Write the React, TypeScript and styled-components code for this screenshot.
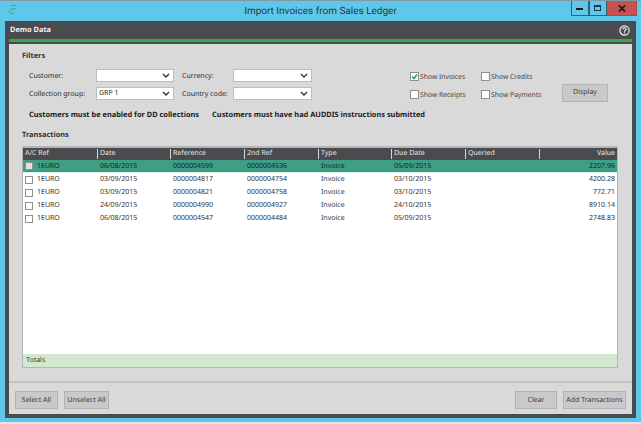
import styled, { createGlobalStyle } from 'styled-components';

const GlobalStyle = createGlobalStyle`
    html, body {
        margin: 0;
        padding: 0;
        background: #e4e4e4;
    }
    * {
        box-sizing: border-box;
    }
`;

const Window = styled.div`
    width: 641px;
    height: 422px;
    display: flex;
    flex-direction: column;
    padding: 0 5px 4px 5px;
    background: #5fc8ea;
    border-top: 1px solid #7d9aa5;
    font-family: 'Noto Sans', 'Liberation Sans', sans-serif;
    font-size: 7px;
    text-rendering: geometricPrecision;
    color: #2b2b2b;
`;

const TitleBar = styled.div`
    position: relative;
    height: 20px;
    flex: none;
    display: flex;
    align-items: center;
    justify-content: center;
    font-family: Roboto, 'Liberation Sans', sans-serif;
    font-size: 10px;
    color: #1d3a47;
`;

const AppIcon = styled.svg`
    position: absolute;
    left: 3px;
    top: 3px;
`;

const Controls = styled.div`
    position: absolute;
    top: 0;
    right: -1px;
    display: flex;
    height: 15px;
`;

const Control = styled.div<{ $close?: boolean; $w: number }>`
    width: ${(p) => p.$w}px;
    display: flex;
    align-items: center;
    justify-content: center;
    border: 1px solid ${(p) => (p.$close ? '#a94a42' : '#33616f')};
    border-top: none;
    border-left-width: ${(p) => (p.$close ? 0 : 1)}px;
    background: ${(p) => (p.$close ? '#c75050' : 'transparent')};
    color: #1a1a1a;
`;

const Frame = styled.div`
    flex: 1;
    display: flex;
    flex-direction: column;
    border: 4px solid #4a4b4f;
    border-top: none;
    min-height: 0;
`;

const Header = styled.div`
    height: 18px;
    flex: none;
    display: flex;
    align-items: center;
    justify-content: space-between;
    padding: 0 2px 0 1px;
    background: #4a4b4f;
    color: #f2f2f2;
    font-size: 7.4px;
    font-weight: 700;
`;

const GreenRule = styled.div`
    height: 3px;
    flex: none;
    background: #36a93f;
    margin-bottom: 2px;
    box-shadow: 0 2px 0 #4a4b4f;
`;

const Content = styled.div`
    flex: 1;
    min-height: 0;
    display: flex;
    flex-direction: column;
    background: #d9d9d9;
`;

const Main = styled.div`
    flex: 1;
    min-height: 0;
    display: flex;
    flex-direction: column;
    padding: 6px 14px 13px 13px;
    border-bottom: 2px solid #c4c4c4;
`;

const SectionTitle = styled.div`
    height: 12px;
    line-height: 12px;
    font-size: 7.4px;
    font-weight: 700;
    color: #333;
`;

const FilterGrid = styled.div`
    display: grid;
    grid-template-columns: 67px 78px 8px 51px 79px 98px 71px 81px 46px;
    grid-template-rows: 13px 13px;
    row-gap: 5px;
    margin: 7px 0 0 7px;
    align-items: center;
`;

const FieldLabel = styled.div<{ $col: number }>`
    grid-column: ${(p) => p.$col};
    padding-top: 2px;
    white-space: nowrap;
`;

const Select = styled.div<{ $col: number }>`
    grid-column: ${(p) => p.$col};
    height: 13px;
    display: flex;
    align-items: center;
    justify-content: space-between;
    padding: 0 3px 0 2px;
    background: #fff;
    border: 1px solid #bdbdbd;
`;

const CheckItem = styled.div<{ $col: number }>`
    grid-column: ${(p) => p.$col};
    display: flex;
    align-items: center;
    gap: 1px;
    padding-top: 2px;
    white-space: nowrap;
    color: #444;
    font-size: 6.8px;
`;

const Box = styled.div<{ $tint?: boolean; $size: number }>`
    width: ${(p) => p.$size}px;
    height: ${(p) => p.$size}px;
    flex: none;
    display: flex;
    align-items: center;
    justify-content: center;
    background: ${(p) => (p.$tint ? '#e6e2d4' : '#fff')};
    border: 1px solid #8f8f8f;
`;

const Button = styled.div<{ $w: number }>`
    width: ${(p) => p.$w}px;
    height: 18px;
    display: flex;
    align-items: center;
    justify-content: center;
    flex: none;
    background: #c9c9c9;
    border: 1px solid #b3b3b3;
    color: #3a3a3a;
    white-space: nowrap;
`;

const DisplayButton = styled(Button)`
    grid-column: 9;
    grid-row: 1 / span 2;
    margin-top: 16px;
`;

const Notices = styled.div`
    display: flex;
    gap: 13px;
    height: 12px;
    line-height: 12px;
    margin: 9px 0 8px 7px;
    font-size: 7.4px;
    font-weight: 700;
    color: #1c1c1c;
    white-space: nowrap;
`;

const Table = styled.div`
    flex: 1;
    min-height: 0;
    display: flex;
    flex-direction: column;
    margin: 5px 0 0 0;
    background: #fff;
    border: 1px solid #b5b5b5;
    border-top-width: 2px;
`;

const columns = '74px 73px 74px 74px 73px 74px 74px 79px';

const HeadRow = styled.div`
    display: grid;
    grid-template-columns: ${columns};
    height: 12px;
    flex: none;
    background: #4a4b4f;
    color: #e6e6e6;
`;

const HeadCell = styled.div<{ $right?: boolean; $first?: boolean }>`
    padding: 0 3px 0 2px;
    text-align: ${(p) => (p.$right ? 'right' : 'left')};
    border-left: ${(p) => (p.$first ? 'none' : '1px solid #d8d8d8')};
    margin: 1px 0;
    line-height: 10px;
`;

const Row = styled.div<{ $selected?: boolean }>`
    display: grid;
    grid-template-columns: ${columns};
    height: 13px;
    flex: none;
    align-items: center;
    background: ${(p) => (p.$selected ? '#3f9f85' : '#fff')};
    color: ${(p) => (p.$selected ? '#16231f' : '#333')};
    border-bottom: ${(p) => (p.$selected ? '1px solid #dff0ea' : 'none')};
`;

const Cell = styled.div<{ $right?: boolean }>`
    padding: 0 3px;
    text-align: ${(p) => (p.$right ? 'right' : 'left')};
    white-space: nowrap;
`;

const RefCell = styled.div`
    display: flex;
    align-items: center;
    gap: 4px;
    padding-left: 2px;
`;

const RowsArea = styled.div`
    flex: 1;
    min-height: 0;
`;

const Totals = styled.div`
    height: 13px;
    flex: none;
    line-height: 13px;
    padding-left: 3px;
    background: #d3e9cf;
    color: #3a3a3a;
`;

const Footer = styled.div`
    height: 31px;
    flex: none;
    display: flex;
    align-items: flex-start;
    justify-content: space-between;
    padding: 8px 6px 0 6px;
`;

const ButtonGroup = styled.div`
    display: flex;
    gap: 6px;
`;

const rows = [
    ['06/08/2015', '0000004599', '0000004536', '05/09/2015', '2207.96'],
    ['03/09/2015', '0000004817', '0000004754', '03/10/2015', '4200.28'],
    ['03/09/2015', '0000004821', '0000004758', '03/10/2015', '772.71'],
    ['24/09/2015', '0000004990', '0000004927', '24/10/2015', '8910.14'],
    ['06/08/2015', '0000004547', '0000004484', '05/09/2015', '2748.83'],
];

const heads = ['A/C Ref', 'Date', 'Reference', '2nd Ref', 'Type', 'Due Date', 'Queried', 'Value'];

const Chevron = () => (
    <svg width="8" height="5" viewBox="0 0 8 5">
        <path d="M1 1l3 3 3-3" fill="none" stroke="#333" strokeWidth="1.4" />
    </svg>
);

const App = () => (
    <>
        <GlobalStyle />
        <Window>
            <TitleBar>
                Import Invoices from Sales Ledger
                <AppIcon width="9" height="11" viewBox="0 0 9 11">
                    <path d="M2 3c1-2 4-2 6-1M8 5C6 4 3 5 1 8c2 2 4 2 5 0" fill="none" stroke="#3f9f85" strokeWidth="1" />
                </AppIcon>
                <Controls>
                    <Control $w={18}>
                        <svg width="8" height="3">
                            <rect width="7" height="2" y="1" fill="#1a1a1a" />
                        </svg>
                    </Control>
                    <Control $w={18}>
                        <svg width="8" height="7">
                            <rect x="0.5" y="0.5" width="6" height="5" fill="none" stroke="#1a3a4a" />
                            <rect x="0.5" y="0.5" width="6" height="1.5" fill="#1a3a4a" />
                        </svg>
                    </Control>
                    <Control $close $w={30}>
                        <svg width="8" height="7" viewBox="0 0 8 7">
                            <path d="M1 0.5l6 6M7 0.5l-6 6" stroke="#1a1a1a" strokeWidth="1.7" />
                        </svg>
                    </Control>
                </Controls>
            </TitleBar>
            <Frame>
                <Header>
                    <span>Demo Data</span>
                    <svg width="11" height="11" viewBox="0 0 11 11">
                        <circle cx="5.5" cy="5.5" r="4.6" fill="none" stroke="#f2f2f2" strokeWidth="1.2" />
                        <path d="M3.9 4.3c0-2 3.2-2 3.2-.1 0 1.2-1.6 1.2-1.6 2.5" fill="none" stroke="#f2f2f2" strokeWidth="1.2" />
                        <rect x="4.9" y="7.4" width="1.2" height="1.2" fill="#f2f2f2" />
                    </svg>
                </Header>
                <GreenRule />
                <Content>
                    <Main>
                        <SectionTitle>Filters</SectionTitle>
                        <FilterGrid>
                            <FieldLabel $col={1}>Customer:</FieldLabel>
                            <Select $col={2}>
                                <span />
                                <Chevron />
                            </Select>
                            <FieldLabel $col={4}>Currency:</FieldLabel>
                            <Select $col={5}>
                                <span />
                                <Chevron />
                            </Select>
                            <CheckItem $col={7}>
                                <Box $size={9}>
                                    <svg width="7" height="7" viewBox="0 0 7 7">
                                        <path d="M1 3.5l2 2 3-4" fill="none" stroke="#2f8f6b" strokeWidth="1.5" />
                                    </svg>
                                </Box>
                                Show Invoices
                            </CheckItem>
                            <CheckItem $col={8}>
                                <Box $size={9} />
                                Show Credits
                            </CheckItem>
                            <DisplayButton $w={46}>Display</DisplayButton>
                            <FieldLabel $col={1}>Collection group:</FieldLabel>
                            <Select $col={2}>
                                <span>GRP 1</span>
                                <Chevron />
                            </Select>
                            <FieldLabel $col={4}>Country code:</FieldLabel>
                            <Select $col={5}>
                                <span />
                                <Chevron />
                            </Select>
                            <CheckItem $col={7}>
                                <Box $size={9} />
                                Show Receipts
                            </CheckItem>
                            <CheckItem $col={8}>
                                <Box $size={9} />
                                Show Payments
                            </CheckItem>
                        </FilterGrid>
                        <Notices>
                            <span>Customers must be enabled for DD collections</span>
                            <span>Customers must have had AUDDIS instructions submitted</span>
                        </Notices>
                        <SectionTitle>Transactions</SectionTitle>
                        <Table>
                            <HeadRow>
                                {heads.map((h, i) => (
                                    <HeadCell key={h} $first={i === 0} $right={h === 'Value'}>
                                        {h}
                                    </HeadCell>
                                ))}
                            </HeadRow>
                            <RowsArea>
                                {rows.map((r, i) => (
                                    <Row key={r[1]} $selected={i === 0}>
                                        <RefCell>
                                            <Box $size={8} $tint={i === 0} />
                                            1EURO
                                        </RefCell>
                                        <Cell>{r[0]}</Cell>
                                        <Cell>{r[1]}</Cell>
                                        <Cell>{r[2]}</Cell>
                                        <Cell>Invoice</Cell>
                                        <Cell>{r[3]}</Cell>
                                        <Cell />
                                        <Cell $right>{r[4]}</Cell>
                                    </Row>
                                ))}
                            </RowsArea>
                            <Totals>Totals</Totals>
                        </Table>
                    </Main>
                    <Footer>
                        <ButtonGroup>
                            <Button $w={43}>Select All</Button>
                            <Button $w={45}>Unselect All</Button>
                        </ButtonGroup>
                        <ButtonGroup>
                            <Button $w={42}>Clear</Button>
                            <Button $w={63}>Add Transactions</Button>
                        </ButtonGroup>
                    </Footer>
                </Content>
            </Frame>
        </Window>
    </>
);

export default App;
